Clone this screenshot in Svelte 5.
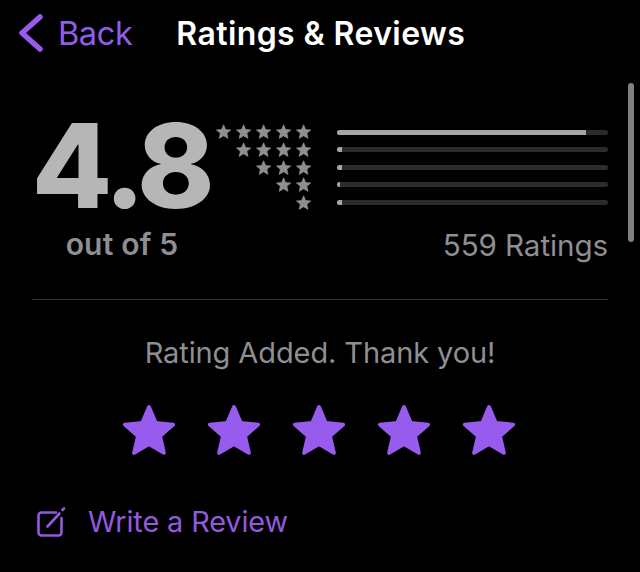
<script>
  const starRows = [5, 4, 3, 2, 1];
  const bars = [92, 2, 2, 1, 2];
  const star = "12,2.5 14.82,9.12 21.99,9.76 16.56,14.48 18.17,21.49 12,17.8 5.83,21.49 7.44,14.48 2.01,9.76 9.18,9.12";
</script>

<main class="page">
  <header class="nav">
    <span class="back">
      <svg class="chevron" viewBox="0 0 26 38" aria-hidden="true"><path d="M22 3 L4 19 L22 35" /></svg>
      Back
    </span>
    <h1>Ratings &amp; Reviews</h1>
  </header>

  <section class="summary">
    <div class="score">
      <div class="big">4.8</div>
      <div class="outof">out of 5</div>
    </div>
    <div class="stars">
      {#each starRows as n}
        <div class="star-row">
          {#each Array(n) as _}
            <svg viewBox="0 0 24 24" aria-hidden="true"><polygon points={star} /></svg>
          {/each}
        </div>
      {/each}
    </div>
    <div class="chart">
      <div class="bars">
        {#each bars as w}
          <div class="track"><div class="fill" style="width:{w}%"></div></div>
        {/each}
      </div>
      <div class="count">559 Ratings</div>
    </div>
  </section>

  <hr />

  <p class="added">Rating Added. Thank you!</p>

  <div class="rate">
    {#each Array(5) as _}
      <svg viewBox="0 0 24 24" aria-hidden="true"><polygon points={star} /></svg>
    {/each}
  </div>

  <div class="write">
    <svg viewBox="0 0 30 30" aria-hidden="true">
      <path d="M20 5.500H5.500a3 3 0 0 0-3 3v17a3 3 0 0 0 3 3h17a3 3 0 0 0 3-3V11" />
      <path d="M11.500 19.500 23.500 6.500" />
      <path d="M26.500 3 L28 1.500" />
    </svg>
    <span>Write a Review</span>
  </div>

  <div class="scrollbar"></div>
</main>

<style>
  :global(body) {
    margin: 0;
    background: #000;
  }
  .page {
    position: relative;
    width: 640px;
    height: 572px;
    overflow: hidden;
    background: #000;
    font-family: Inter, "Liberation Sans", sans-serif;
    box-sizing: border-box;
    padding: 0 32px;
  }
  .nav {
    display: flex;
    align-items: center;
    height: 66px;
    margin-left: -14px;
    gap: 44px;
  }
  .back {
    display: flex;
    align-items: center;
    gap: 14px;
    color: #935bea;
    font-size: 32.500px;
    letter-spacing: -0.4px;
  }
  .chevron {
    width: 26px;
    height: 38px;
    fill: none;
    stroke: #975bee;
    stroke-width: 5.500;
    stroke-linecap: round;
    stroke-linejoin: round;
  }
  h1 {
    margin: 0;
    color: #fff;
    font-size: 32px;
    font-weight: 600;
    letter-spacing: 0.4px;
  }
  .summary {
    display: flex;
    height: 233px;
    box-sizing: border-box;
    padding-top: 46px;
  }
  .score {
    width: 180px;
    display: flex;
    flex-direction: column;
    align-items: center;
  }
  .big {
    margin-top: 4px;
    margin-left: -2px;
    color: #b6b6b6;
    font-size: 117px;
    font-weight: 800;
    line-height: 100px;
    letter-spacing: -4.500px;
  }
  .outof {
    margin-top: 11px;
    color: #8e8e93;
    font-size: 30px;
    font-weight: 600;
    line-height: 34px;
    letter-spacing: 0.2px;
  }
  .stars {
    width: 100px;
    margin-top: 11px;
    display: flex;
    flex-direction: column;
    gap: 1.800px;
  }
  .star-row {
    display: flex;
    justify-content: flex-end;
    gap: 2.800px;
    height: 16px;
  }
  .star-row svg {
    width: 17.200px;
    height: 17.200px;
    fill: #8e8e93;
    stroke: #8e8e93;
    stroke-width: 1;
    stroke-linejoin: round;
  }
  .chart {
    flex: 1;
    margin-left: 25px;
    display: flex;
    flex-direction: column;
  }
  .bars {
    margin-top: 18px;
    display: flex;
    flex-direction: column;
    gap: 12.400px;
  }
  .track {
    height: 5px;
    border-radius: 3px;
    background: #2c2c2e;
    overflow: hidden;
  }
  .fill {
    height: 100%;
    background: #a5a5a8;
  }
  .count {
    margin-top: 23px;
    text-align: right;
    color: #8e8e93;
    font-size: 29.600px;
    line-height: 34px;
    letter-spacing: -0.1px;
  }
  hr {
    margin: 0;
    border: 0;
    height: 1px;
    background: #333335;
  }
  .added {
    margin: 35px 0 0;
    text-align: center;
    color: #8e8e93;
    font-size: 29px;
    line-height: 36px;
    letter-spacing: -0.1px;
  }
  .rate {
    margin-top: 30px;
    margin-left: -2px;
    display: flex;
    justify-content: center;
    gap: 27px;
  }
  .rate svg {
    width: 58px;
    height: 58px;
    fill: #975bee;
    stroke: #975bee;
    stroke-width: 1.600;
    stroke-linejoin: round;
  }
  .write {
    margin-top: 45px;
    margin-left: 4px;
    display: flex;
    align-items: center;
    gap: 22px;
    color: #9359de;
    font-size: 28.800px;
    letter-spacing: -0.1px;
  }
  .write svg {
    width: 30px;
    height: 32px;
    fill: none;
    stroke: #9359de;
    stroke-width: 2.600;
    stroke-linecap: round;
  }
  .scrollbar {
    position: absolute;
    left: 628px;
    top: 83px;
    width: 6px;
    height: 159px;
    border-radius: 3px;
    background: #808082;
  }
</style>
